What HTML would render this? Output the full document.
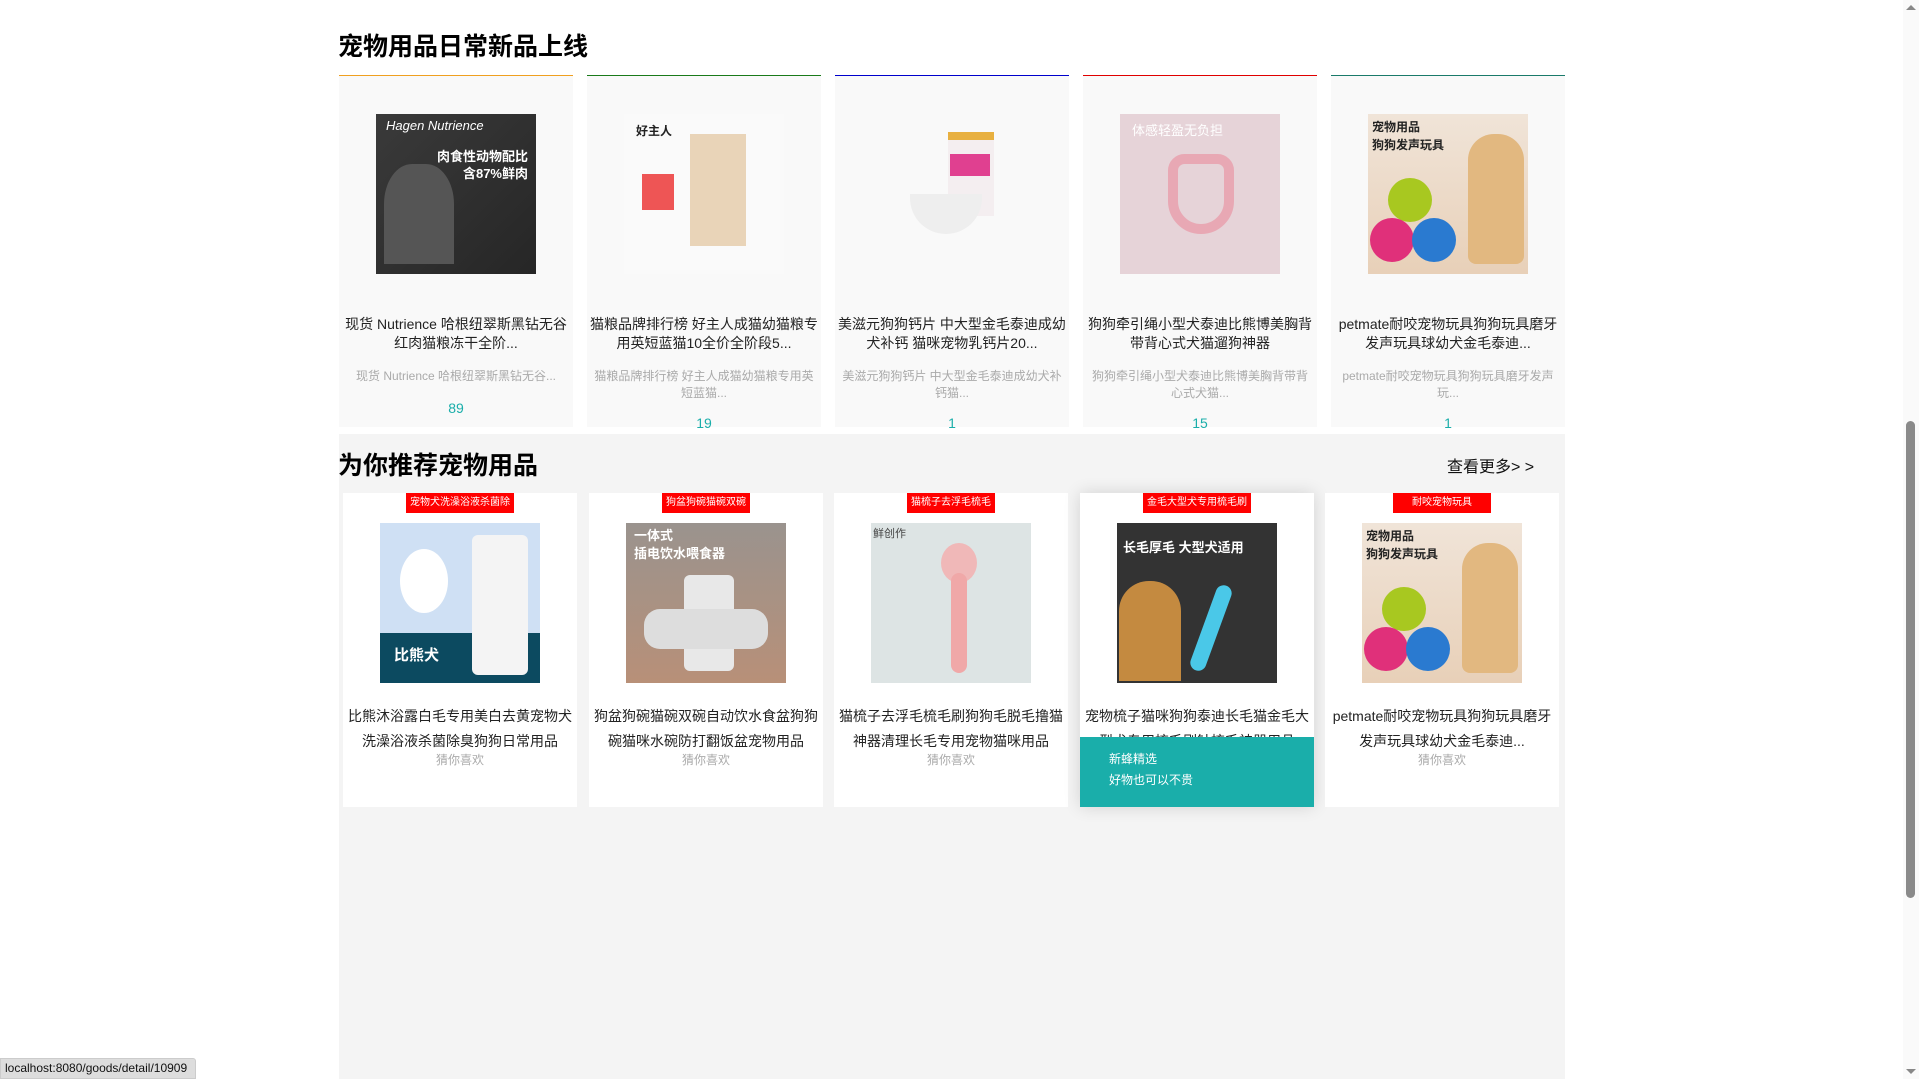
<!DOCTYPE html>
<html><head><meta charset="utf-8"><style>
*{margin:0;padding:0;box-sizing:border-box}
body{width:1919px;height:1079px;overflow:hidden;background:#fff;position:relative;font-family:"Liberation Sans","Noto Sans CJK SC",sans-serif;color:#222}
.a{position:absolute}
h2{position:absolute;font-size:25px;font-weight:bold;color:#000;line-height:30px;font-family:"Liberation Sans","Noto Sans CJK SC",sans-serif}
.tc{position:absolute;top:75px;width:234px;height:352px;background:#f9f9f9;border-top:1px solid #000}
.tc .img{position:absolute;left:37px;top:38px;width:160px;height:160px}
.tc .t{position:absolute;left:2px;right:2px;top:239px;font-size:14px;line-height:19px;text-align:center;color:#222}
.tc .d{position:absolute;left:4px;right:4px;top:292px;font-size:12px;line-height:17px;text-align:center;color:#aaa}
.tc .n{position:absolute;left:0;right:0;font-size:14px;text-align:center;color:#1aaeaa;line-height:18px}
.bc{position:absolute;top:493px;width:234px;height:314px;background:#fff}
.bc .tag{position:absolute;top:0;height:20px;left:50%;transform:translateX(-50%);background:#f00;color:#fff;font-size:10px;line-height:20px;padding:0 4px;white-space:nowrap}
.bc .img{position:absolute;left:37px;top:30px;width:160px;height:160px}
.bc .t{position:absolute;left:4px;right:4px;top:211px;font-size:14px;line-height:25px;text-align:center;color:#222}
.bc .g{position:absolute;left:0;right:0;top:259px;font-size:12px;line-height:16px;text-align:center;color:#aaa}
</style></head><body>
<h2 style="left:338px;top:32px">宠物用品日常新品上线</h2>

<div class="tc" style="left:339px;border-color:#f0a020">
 <div class="img" style="background:linear-gradient(135deg,#3a3a3a,#262626)"><div class="a" style="left:10px;top:4px;color:#fff;font-size:13px;font-style:italic">Hagen Nutrience</div><div class="a" style="right:8px;top:34px;color:#fff;font-size:13px;font-weight:bold;text-align:right;line-height:17px">肉食性动物配比<br>含87%鲜肉</div><div class="a" style="left:8px;top:50px;width:70px;height:100px;border-radius:40% 40% 0 0;background:#555"></div></div>
 <div class="t">现货 Nutrience 哈根纽翠斯黑钻无谷红肉猫粮冻干全阶...</div>
 <div class="d">现货 Nutrience 哈根纽翠斯黑钻无谷...</div>
 <div class="n" style="top:323px">89</div>
</div>
<div class="tc" style="left:587px;border-color:#1a7a1a">
 <div class="img" style="background:#fafafa"><div class="a" style="left:66px;top:20px;width:56px;height:112px;background:#e9d4b8"></div><div class="a" style="left:18px;top:60px;width:32px;height:36px;background:#e55"></div><div class="a" style="left:12px;top:8px;font-size:12px;font-weight:bold">好主人</div></div>
 <div class="t">猫粮品牌排行榜 好主人成猫幼猫粮专用英短蓝猫10全价全阶段5...</div>
 <div class="d">猫粮品牌排行榜 好主人成猫幼猫粮专用英短蓝猫...</div>
 <div class="n" style="top:338px">19</div>
</div>
<div class="tc" style="left:835px;border-color:#0000cc">
 <div class="img" style="background:#f9f9f9"><div class="a" style="left:76px;top:18px;width:46px;height:84px;background:#f4eef0;border-top:8px solid #e8b040"></div><div class="a" style="left:78px;top:40px;width:40px;height:22px;background:#e04090"></div><div class="a" style="left:38px;top:80px;width:72px;height:40px;border-radius:0 0 40px 40px;background:#eee"></div></div>
 <div class="t">美滋元狗狗钙片 中大型金毛泰迪成幼犬补钙 猫咪宠物乳钙片20...</div>
 <div class="d">美滋元狗狗钙片 中大型金毛泰迪成幼犬补钙猫...</div>
 <div class="n" style="top:338px">1</div>
</div>
<div class="tc" style="left:1083px;border-color:#e00000">
 <div class="img" style="background:#e6d3d8"><div class="a" style="left:12px;top:6px;color:#fff;font-size:13px">体感轻盈无负担</div><div class="a" style="left:48px;top:40px;width:66px;height:80px;border-radius:20px 20px 40px 40px;border:10px solid #e8a8b4"></div></div>
 <div class="t">狗狗牵引绳小型犬泰迪比熊博美胸背带背心式犬猫遛狗神器</div>
 <div class="d">狗狗牵引绳小型犬泰迪比熊博美胸背带背心式犬猫...</div>
 <div class="n" style="top:338px">15</div>
</div>
<div class="tc" style="left:1331px;border-color:#1a7a6a">
 <div class="img" style="background:linear-gradient(#f0e4d8,#e8d0b8)"><div class="a" style="left:4px;top:4px;font-size:12px;font-weight:bold;line-height:18px">宠物用品<br>狗狗发声玩具</div><div class="a" style="left:100px;top:20px;width:56px;height:130px;border-radius:26px 26px 8px 8px;background:#e2b880"></div><div class="a" style="left:20px;top:64px;width:44px;height:44px;border-radius:50%;background:#a8c820"></div><div class="a" style="left:2px;top:104px;width:44px;height:44px;border-radius:50%;background:#e0307a"></div><div class="a" style="left:44px;top:104px;width:44px;height:44px;border-radius:50%;background:#2a7ad0"></div></div>
 <div class="t">petmate耐咬宠物玩具狗狗玩具磨牙发声玩具球幼犬金毛泰迪...</div>
 <div class="d">petmate耐咬宠物玩具狗狗玩具磨牙发声玩...</div>
 <div class="n" style="top:338px">1</div>
</div>

<div class="a" style="left:339px;top:434px;width:1226px;height:645px;background:#f4f4f4"></div>
<h2 style="left:338px;top:451px">为你推荐宠物用品</h2>
<div class="a" style="left:1447px;top:453px;font-size:16px;color:#111">查看更多&gt; &gt;</div>

<div class="bc" style="left:343px"><div class="tag">宠物犬洗澡浴液杀菌除</div>
 <div class="img" style="background:#cfe0f4"><div class="a" style="left:0;bottom:0;width:160px;height:50px;background:#0c4a60"></div><div class="a" style="left:14px;bottom:18px;color:#fff;font-size:15px;font-weight:bold">比熊犬</div><div class="a" style="left:92px;top:12px;width:56px;height:140px;background:#f4f4f4;border-radius:6px"></div><div class="a" style="left:20px;top:26px;width:48px;height:64px;border-radius:50%;background:#fff"></div></div>
 <div class="t">比熊沐浴露白毛专用美白去黄宠物犬洗澡浴液杀菌除臭狗狗日常用品</div><div class="g">猜你喜欢</div></div>
<div class="bc" style="left:589px"><div class="tag">狗盆狗碗猫碗双碗</div>
 <div class="img" style="background:linear-gradient(#9a938e,#b89078)"><div class="a" style="left:8px;top:4px;color:#fff;font-size:13px;font-weight:bold;line-height:18px">一体式<br>插电饮水喂食器</div><div class="a" style="left:58px;top:52px;width:50px;height:96px;background:#e8e8e8;border-radius:6px"></div><div class="a" style="left:18px;top:86px;width:124px;height:40px;background:#ddd;border-radius:16px"></div></div>
 <div class="t">狗盆狗碗猫碗双碗自动饮水食盆狗狗碗猫咪水碗防打翻饭盆宠物用品</div><div class="g">猜你喜欢</div></div>
<div class="bc" style="left:834px"><div class="tag">猫梳子去浮毛梳毛</div>
 <div class="img" style="background:#dde4e4"><div class="a" style="left:2px;top:2px;font-size:11px;color:#444">鲜创作</div><div class="a" style="left:70px;top:20px;width:36px;height:40px;border-radius:50%;background:#f0b8b8"></div><div class="a" style="left:80px;top:50px;width:16px;height:100px;border-radius:8px;background:#f0a8a8"></div></div>
 <div class="t">猫梳子去浮毛梳毛刷狗狗毛脱毛撸猫神器清理长毛专用宠物猫咪用品</div><div class="g">猜你喜欢</div></div>
<div class="bc" style="left:1080px;box-shadow:0 0 16px rgba(0,0,0,.14)"><div class="tag">金毛大型犬专用梳毛刷</div>
 <div class="img" style="background:#333"><div class="a" style="left:6px;top:14px;color:#fff;font-size:13px;font-weight:bold">长毛厚毛 大型犬适用</div><div class="a" style="left:2px;top:58px;width:62px;height:100px;border-radius:30px 30px 0 0;background:#c48a40"></div><div class="a" style="left:86px;top:60px;width:16px;height:90px;border-radius:8px;background:#4ac8e8;transform:rotate(20deg)"></div></div>
 <div class="t">宠物梳子猫咪狗狗泰迪长毛猫金毛大型犬专用梳毛刷针梳毛神器用品</div>
 <div class="a" style="left:0;top:244px;width:234px;height:70px;background:#1aaeaa;color:#fff;font-size:12px;line-height:21px;padding:12px 0 0 29px">新蜂精选<br>好物也可以不贵</div></div>
<div class="bc" style="left:1325px"><div class="tag" style="padding:0 19px">耐咬宠物玩具</div>
 <div class="img" style="background:linear-gradient(#f0e4d8,#e8d0b8)"><div class="a" style="left:4px;top:4px;font-size:12px;font-weight:bold;line-height:18px">宠物用品<br>狗狗发声玩具</div><div class="a" style="left:100px;top:20px;width:56px;height:130px;border-radius:26px 26px 8px 8px;background:#e2b880"></div><div class="a" style="left:20px;top:64px;width:44px;height:44px;border-radius:50%;background:#a8c820"></div><div class="a" style="left:2px;top:104px;width:44px;height:44px;border-radius:50%;background:#e0307a"></div><div class="a" style="left:44px;top:104px;width:44px;height:44px;border-radius:50%;background:#2a7ad0"></div></div>
 <div class="t">petmate耐咬宠物玩具狗狗玩具磨牙发声玩具球幼犬金毛泰迪...</div><div class="g">猜你喜欢</div></div>

<div class="a" style="left:1903px;top:0;width:16px;height:1079px;background:#fafafa"></div>
<div class="a" style="left:1906px;top:421px;width:9px;height:477px;background:#8a8a8a;border-radius:5px"></div>
<div class="a" style="left:1906px;top:5px;width:0;height:0;border-left:5px solid transparent;border-right:5px solid transparent;border-bottom:5px solid #888"></div>
<div class="a" style="left:1906px;top:1069px;width:0;height:0;border-left:5px solid transparent;border-right:5px solid transparent;border-top:5px solid #888"></div>
<div class="a" style="left:0;top:1058px;width:196px;height:21px;background:#ddd;border:1px solid #ccc;border-radius:0 3px 0 0;font-size:12px;line-height:19px;padding-left:4px;color:#111">localhost:8080/goods/detail/10909</div>
</body></html>
